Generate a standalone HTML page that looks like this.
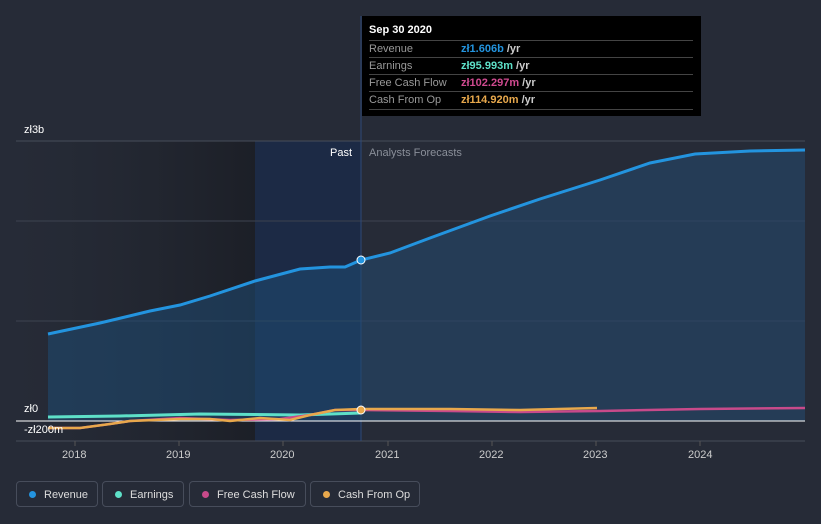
<!DOCTYPE html><html><head><style>
body{margin:0;width:821px;height:524px;background:#262b37;font-family:"Liberation Sans",sans-serif;overflow:hidden;position:relative}
.t{position:absolute;font-size:11px;color:#fff}
.tip{position:absolute;left:362px;top:16px;width:339px;height:100px;background:#000;font-size:11px}
.tip .r{position:absolute;left:7px;right:8px;height:17px;border-top:1px solid #444;color:#999;line-height:17px}
.tip .r b{position:absolute;left:92px;font-weight:bold}
.tip .r i{font-style:normal;color:#ccc}
.leg{position:absolute;top:481px;height:26px;border:1px solid #474d5b;border-radius:4px;color:#ddd;font-size:11px;line-height:26px;box-sizing:border-box;padding-left:27px}
.leg:before{content:"";position:absolute;left:12px;top:9px;width:7px;height:7px;border-radius:50%;background:var(--c)}
</style></head><body>
<svg width="821" height="524" style="position:absolute;left:0;top:0">
<defs><linearGradient id="p" x1="0" x2="1"><stop offset="0" stop-color="#22262f" stop-opacity="0"/><stop offset="1" stop-color="#1c1f27"/></linearGradient></defs>
<rect x="16" y="141" width="239" height="300" fill="url(#p)"/>
<rect x="255" y="141" width="106" height="300" fill="#1a2a48" opacity=".8"/>
<line x1="16" y1="141" x2="805" y2="141" stroke="#474d5a"/>
<line x1="16" y1="221" x2="805" y2="221" stroke="#3d4350"/>
<line x1="16" y1="321" x2="805" y2="321" stroke="#3d4350"/>
<line x1="16" y1="441" x2="805" y2="441" stroke="#474d5a"/>
<line x1="361" y1="16" x2="361" y2="441" stroke="#2e4a78"/>
<path d="M48,334 L100,323 150,311 180,305 210,296 255,281 300,269 330,267 345,267 361,260 L361,421 L48,421Z" fill="#1f4a72" opacity=".55"/>
<path d="M361,260 390,253 430,238 490,216 540,199 600,180 650,163 695,154 750,151 805,150 L805,421 L361,421Z" fill="#25476a" opacity=".6"/>
<path d="M48,334 L100,323 150,311 180,305 210,296 255,281 300,269 330,267 345,267 361,260 390,253 430,238 490,216 540,199 600,180 650,163 695,154 750,151 805,150" fill="none" stroke="#2394df" stroke-width="3"/>
<line x1="16" y1="421" x2="805" y2="421" stroke="#fff"/>
<path d="M48,417 L120,416 200,414 300,415 361,413" fill="none" stroke="#5ee0c8" stroke-width="3"/>
<path d="M48,428 L80,428 110,424 130,421 180,418 230,420 280,419 310,415 335,410 361,410 450,411 520,412 600,411 700,409 805,408" fill="none" stroke="#c84a8a" stroke-width="2.5"/>
<path d="M48,428 L80,428 110,424 130,421 180,419 210,419 230,421 260,418 290,420 310,415 335,410 361,409 450,409 520,410 597,408" fill="none" stroke="#e8a84c" stroke-width="2.5"/>
<circle cx="361" cy="260" r="4" fill="#2394df" stroke="#fff"/>
<circle cx="361" cy="410" r="4" fill="#e8a84c" stroke="#fff"/>
<g stroke="#555" ><line x1="75" y1="441" x2="75" y2="446"/><line x1="179" y1="441" x2="179" y2="446"/><line x1="283" y1="441" x2="283" y2="446"/><line x1="388" y1="441" x2="388" y2="446"/><line x1="492" y1="441" x2="492" y2="446"/><line x1="596" y1="441" x2="596" y2="446"/><line x1="700" y1="441" x2="700" y2="446"/></g>
</svg>
<div class="t" style="left:24px;top:124px">zł3b</div>
<div class="t" style="left:24px;top:403px">zł0</div>
<div class="t" style="left:24px;top:424px">-zł200m</div>
<div class="t" style="left:330px;top:147px">Past</div>
<div class="t" style="left:369px;top:147px;color:#8a8f99">Analysts Forecasts</div>
<div class="t" style="left:62px;top:449px;color:#ccc">2018</div>
<div class="t" style="left:166px;top:449px;color:#ccc">2019</div>
<div class="t" style="left:270px;top:449px;color:#ccc">2020</div>
<div class="t" style="left:375px;top:449px;color:#ccc">2021</div>
<div class="t" style="left:479px;top:449px;color:#ccc">2022</div>
<div class="t" style="left:583px;top:449px;color:#ccc">2023</div>
<div class="t" style="left:688px;top:449px;color:#ccc">2024</div>
<div class="tip">
<div style="position:absolute;left:7px;top:8px;color:#fff;font-weight:bold">Sep 30 2020</div>
<div class="r" style="top:24px">Revenue<b style="color:#2394df">zł1.606b <i>/yr</i></b></div>
<div class="r" style="top:41px">Earnings<b style="color:#5ee0c8">zł95.993m <i>/yr</i></b></div>
<div class="r" style="top:58px">Free Cash Flow<b style="color:#d04a90">zł102.297m <i>/yr</i></b></div>
<div class="r" style="top:75px;border-bottom:1px solid #444">Cash From Op<b style="color:#e8a84c">zł114.920m <i>/yr</i></b></div>
</div>
<div class="leg" style="left:16px;width:82px;--c:#2394df">Revenue</div>
<div class="leg" style="left:102px;width:82px;--c:#5ee0c8">Earnings</div>
<div class="leg" style="left:189px;width:117px;--c:#c84a8a">Free Cash Flow</div>
<div class="leg" style="left:310px;width:110px;--c:#e8a84c">Cash From Op</div>
</body></html>
